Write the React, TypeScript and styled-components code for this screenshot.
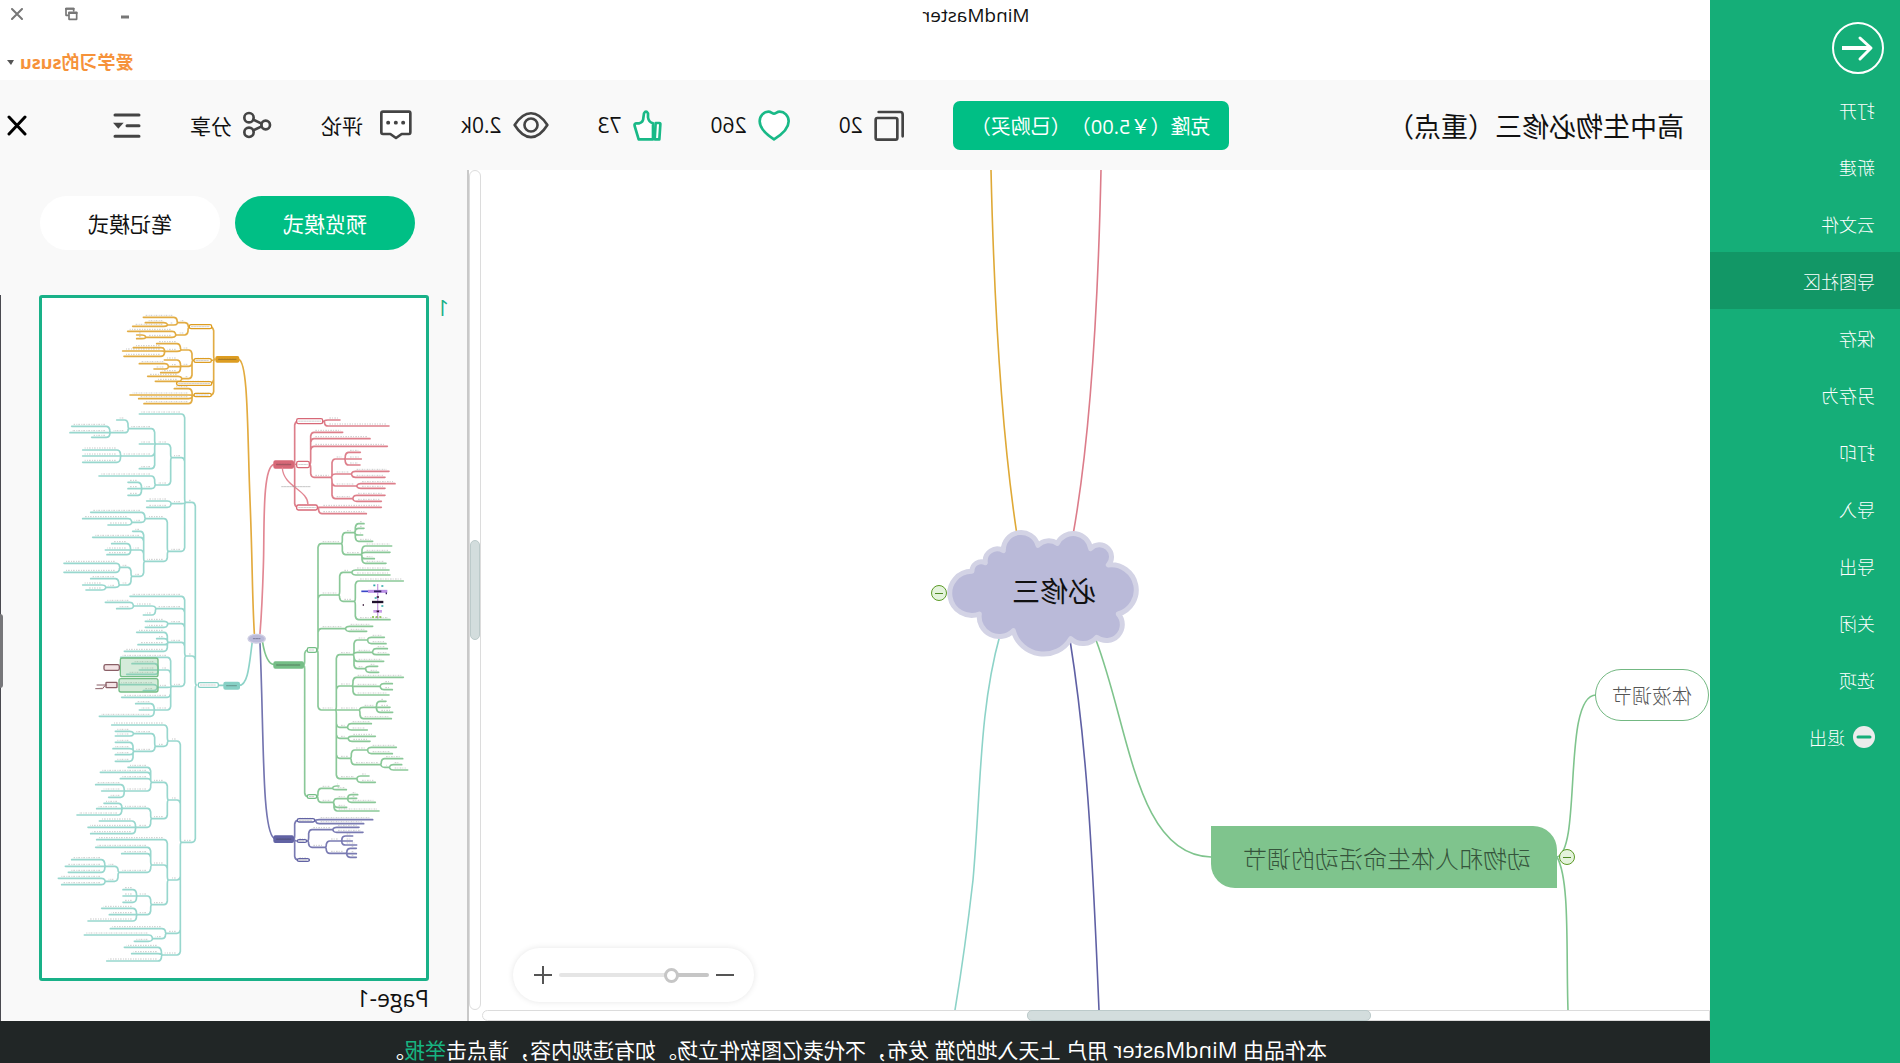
import React from "react";
import styled, { createGlobalStyle, css } from "styled-components";

const GlobalStyle = createGlobalStyle`
  *, *::before, *::after { box-sizing: border-box; }
  html, body { margin: 0; padding: 0; overflow: hidden; }
  button, input { font: inherit; color: inherit; }
  button { border: 0; background: none; padding: 0; cursor: pointer; }
`;

const brand = "#00bf85";
const ink = "#444444";

/* The whole window is shown as a mirror image. */
const Window = styled.div`
  display: flex;
  height: 100vh;
  transform: scaleX(-1);
  background: #ffffff;
  color: #111111;
  font-family: "Open Sans", "Noto Sans CJK SC", sans-serif;
  font-size: 21px;
  text-spacing-trim: space-all;
`;

/* Drawings are written in screen direction, so they are turned back. */
const Drawing = styled.svg`
  display: block;
  flex: none;
  transform: scaleX(-1);
  fill: none;
  stroke-linecap: round;
  stroke-linejoin: round;
`;

/* ---------- sidebar ---------- */

const Sidebar = styled.nav`
  flex: 0 0 190px;
  background: #15ae78;
  color: #ffffff;
`;

const BackButton = styled.button`
  display: block;
  margin: 22px 0 7px 16px;
`;

const Menu = styled.ul`
  list-style: none;
  margin: 0;
  padding: 0;
`;

const MenuButton = styled.button<{ $active?: boolean }>`
  display: flex;
  align-items: center;
  gap: 8px;
  width: 100%;
  height: 57px;
  padding-left: 25px;
  font-size: 18px;
  font-weight: 300;
  background: ${(p) => (p.$active ? "#129766" : "transparent")};
`;

/* ---------- header ---------- */

const Main = styled.div`
  flex: 1;
  min-width: 0;
  display: flex;
  flex-direction: column;
`;

const TitleBar = styled.header`
  display: flex;
  height: 80px;
`;

const AppName = styled.div`
  flex: 1;
  text-align: center;
  font-size: 19px;
  line-height: 30px;
`;

const Account = styled.div`
  flex: 0 0 242px;
  display: flex;
  flex-direction: column;
  align-items: flex-end;
  justify-content: space-between;
  padding: 7px 11px 6px 0;
`;

const WindowControls = styled.div`
  display: flex;
  align-items: center;
  gap: 42px;
`;

const UserButton = styled.button`
  display: flex;
  align-items: center;
  gap: 6px;
  margin-right: -4px;
  color: #f6923a;
  font-size: 18px;
  font-weight: 700;
  line-height: 24px;
`;

const Toolbar = styled.div`
  display: flex;
  align-items: center;
  gap: 49px;
  height: 90px;
  padding: 0 7px 0 26px;
  background: #f9f9f9;
`;

const DocTitle = styled.h1`
  flex: 1;
  margin: 0;
  font-size: 27px;
  font-weight: 400;
  white-space: nowrap;
`;

const CloneButton = styled.button`
  width: 276px;
  height: 49px;
  border-radius: 7px;
  background: ${brand};
  color: #ffffff;
  font-size: 20px;
  white-space: nowrap;
`;

const Tool = styled.button<{ $gap?: number }>`
  display: flex;
  align-items: center;
  gap: ${(p) => p.$gap ?? 11}px;
  white-space: nowrap;
`;

const CloseTool = styled.button`
  margin-left: 37px;
`;

/* ---------- canvas ---------- */

const Body = styled.div`
  flex: 1;
  min-height: 0;
  display: flex;
`;

const CanvasColumn = styled.main`
  flex: 1;
  min-width: 0;
  display: flex;
  flex-direction: column;
`;

const Canvas = styled.div`
  position: relative;
  flex: 1;
  min-height: 0;
  overflow: hidden;
`;

const place = css<{ $left: number; $top: number }>`
  position: absolute;
  left: ${(p) => p.$left}px;
  top: ${(p) => p.$top}px;
`;

const RootLabel = styled.div<{ $left: number; $top: number }>`
  ${place}
  width: 170px;
  height: 126px;
  display: grid;
  place-items: center;
  font-size: 28px;
`;

const TopicNode = styled.div<{ $left: number; $top: number }>`
  ${place}
  width: 346px;
  height: 62px;
  display: grid;
  place-items: center;
  padding-right: 6px;
  border-radius: 24px 0 24px 0;
  background: #7fc48d;
  color: #35543b;
  font-size: 24px;
  font-weight: 300;
`;

const SubNode = styled.div<{ $left: number; $top: number }>`
  ${place}
  width: 114px;
  height: 52px;
  display: grid;
  place-items: center;
  border: 1px solid #73b882;
  border-radius: 26px;
  background: #ffffff;
  color: #555555;
  font-size: 20px;
  font-weight: 300;
`;

const Collapse = styled.button<{ $left: number; $top: number }>`
  ${place}
  width: 16px;
  height: 16px;
  display: grid;
  place-items: center;
  border: 1px solid #5b9a26;
  border-radius: 50%;
  background: #e4f3dc;

  &::after {
    content: "";
    width: 8px;
    height: 1px;
    background: #4f8a24;
  }
`;

const ZoomBar = styled.div`
  position: absolute;
  right: 31px;
  bottom: 8px;
  display: flex;
  align-items: center;
  gap: 7px;
  width: 241px;
  height: 54px;
  padding: 0 21px 0 20px;
  border-radius: 27px;
  background: #ffffff;
  box-shadow: 0 0 6px rgba(0, 0, 0, 0.1);
`;

const Range = styled.input`
  appearance: none;
  flex: 1;
  min-width: 0;
  height: 4px;
  margin: 0;
  border-radius: 2px;
  background: linear-gradient(to right, #c6c6c6 24%, #e5e5e5 24%);

  &::-webkit-slider-thumb {
    appearance: none;
    width: 15px;
    height: 15px;
    border: 3px solid #c6c6c6;
    border-radius: 50%;
    background: #ffffff;
  }
`;

const HScroll = styled.div`
  height: 11px;
  border: 1px solid #dcdcdc;
  border-radius: 0 6px 6px 0;
`;

const HThumb = styled.div`
  width: 28%;
  height: 11px;
  margin: -1px 0 0 27.6%;
  border: 1px solid #bccaca;
  border-radius: 5px;
  background: #d3dddd;
`;

const VScroll = styled.div`
  flex: 0 0 12px;
  margin: 0 0 11px 1px;
  border: 1px solid #dcdcdc;
  border-radius: 6px;
  display: flex;
  flex-direction: column;
`;

const VThumb = styled.div`
  flex: 0 0 12%;
  border: 1px solid #bccaca;
  border-radius: 6px;
  background: #d3dddd;
`;

const Spacer = styled.div`
  flex: 0 0 44%;
`;

/* ---------- preview panel ---------- */

const Panel = styled.aside`
  position: relative;
  flex: 0 0 469px;
  padding: 26px 39px 0 18px;
  border-left: 2px solid #c9c9c9;
  background: #f9f9f9;
`;

const PanelScroll = styled.div`
  position: absolute;
  right: 0;
  top: 125px;
  bottom: 0;
  width: 1px;
  background: #4a4a50;

  &::after {
    content: "";
    position: absolute;
    right: 0;
    top: 44%;
    width: 3px;
    height: 74px;
    border-radius: 3px 0 0 3px;
    background: #77777a;
  }
`;

const Modes = styled.div`
  display: flex;
  gap: 15px;
  padding: 0 1px 0 34px;
`;

const ModeButton = styled.button<{ $active?: boolean }>`
  flex: 1;
  height: 54px;
  border-radius: 27px;
  background: ${(p) => (p.$active ? brand : "#ffffff")};
  color: ${(p) => (p.$active ? "#ffffff" : "#111111")};
`;

const PageItem = styled.figure`
  display: grid;
  grid-template-columns: 8px 1fr;
  column-gap: 12px;
  margin: 45px 0 0;
`;

const PageNumber = styled.span`
  color: #19b188;
  line-height: 26px;
`;

const Thumb = styled.div`
  border: 3px solid #19b188;
  border-radius: 3px;
  background: #ffffff;
`;

const PageName = styled.figcaption`
  grid-column: 2;
  font-size: 23px;
  line-height: 34px;
`;

/* ---------- footer ---------- */

const Footer = styled.footer`
  height: 42px;
  padding-top: 13px;
  overflow: hidden;
  background: #212626;
  color: #ffffff;
  line-height: 30px;
  text-align: center;
  white-space: nowrap;
`;

const ProductName = styled.span`
  font-weight: 500;
  font-size: 22px;
`;

const Report = styled.a`
  color: #17b481;
  text-decoration: none;
`;

/* ---------- page thumbnail ---------- */

type Branch = [number, number, Branch[]?];
type Box = [number, number, number, number];

interface Tree {
  color: string;
  origin: [number, number];
  dir: 1 | -1;
  root: Branch;
  filled: Box;
  boxes: Box[];
}

const trees: Tree[] = [
  {
    color: "#dd9d22",
    origin: [0, 840],
    dir: -1,
    filled: [648, 230, 68, 16],
    boxes: [[568, 134, 67, 12], [582, 236, 52, 11], [530, 305, 105, 11], [582, 340, 52, 10]],
    root: [645, 238, [
      [568, 141, [
        [535, 128, [[430, 112], [505, 135, [[436, 128], [398, 139]]]]],
        [530, 165, [[383, 154], [440, 172, [[410, 165], [410, 176]]]]],
      ]],
      [580, 241, [
        [545, 210, [[470, 191], [497, 214, [[400, 203], [368, 213], [372, 229]]]]],
        [545, 259, [[493, 240], [508, 260, [[418, 251], [462, 267]]], [482, 278]]],
        [548, 296, [[443, 289], [466, 304]]],
      ]],
      [530, 310],
      [580, 346, [[523, 326], [390, 345], [416, 356], [432, 371]]],
    ]],
  },
  {
    color: "#d76877",
    origin: [660, 1140],
    dir: 1,
    filled: [162, 243, 58, 21],
    boxes: [[230, 116, 78, 15], [230, 244, 38, 19], [230, 375, 62, 15]],
    root: [220, 253, [
      [310, 124, [[360, 120], [507, 138]]],
      [268, 253, [
        [368, 157], [450, 176], [502, 199],
        [332, 292, [
          [372, 237, [[421, 217], [424, 237], [420, 255]]],
          [392, 282, [[507, 274], [495, 292]]],
          [408, 318, [[525, 311], [495, 325]]],
          [396, 356, [[495, 346], [484, 364]]],
        ]],
      ]],
      [292, 382, [[484, 382], [439, 401]]],
    ]],
  },
  {
    color: "#75be86",
    origin: [660, 1860],
    dir: 1,
    filled: [162, 126, 88, 18],
    boxes: [[262, 83, 28, 14], [262, 524, 28, 11]],
    root: [250, 135, [
      [290, 90, [
        [363, -229, [
          [402, -262, [[432, -289], [432, -275], [428, -255], [458, -236]]],
          [422, -196, [[515, -222], [510, -203], [463, -184], [498, -170]]],
        ]],
        [355, -75, [[393, -143, [[507, -150], [510, -135]]], [402, -56, [[550, -117], [510, -1]]]]],
        [374, 26, [[458, 19], [440, 34]]],
        [345, 270, [
          [398, 104, [
            [440, 60, [[493, 52], [498, 71]]],
            [455, 97, [[502, 86], [507, 104]]],
            [491, 124],
            [434, 146, [[473, 139], [476, 157]]],
          ]],
          [395, 198, [[550, 172], [478, 199, [[517, 191], [517, 209]]], [507, 225]]],
          [416, 270, [[466, 262, [[498, 244], [510, 262], [518, 277]]], [514, 296]]],
          [380, 322, [[454, 311], [442, 330]]],
          [382, 355, [[466, 349], [450, 364]]],
          [390, 415, [
            [440, 390, [[529, 382], [517, 401]]],
            [480, 434, [[548, 416], [506, 442, [[545, 434], [563, 450]]]]],
          ]],
          [408, 476, [[447, 468], [466, 487]]],
        ]],
      ]],
      [290, 530, [
        [335, 505, [[357, 498], [379, 509]]],
        [338, 547, [[380, 536, [[413, 524], [410, 535], [466, 547]]], [380, 562], [477, 573]]],
      ]],
    ]],
  },
  {
    color: "#6263a4",
    origin: [660, 1860],
    dir: 1,
    filled: [162, 648, 58, 19],
    boxes: [[232, 596, 52, 10], [232, 659, 28, 8], [232, 716, 36, 8]],
    root: [220, 658, [
      [284, 601, [[458, 599], [431, 611]]],
      [262, 663, [
        [336, 629, [[417, 622], [429, 637]]],
        [315, 682, [
          [362, 663, [[398, 648], [397, 663], [410, 675]]],
          [377, 700, [[409, 685], [409, 701], [409, 712]]],
        ]],
      ]],
      [268, 720],
    ]],
  },
  {
    color: "#86d0c5",
    origin: [0, 1500],
    dir: -1,
    filled: [672, 547, 46, 20],
    boxes: [[595, 548, 60, 14]],
    root: [590, 555, [
      [558, 7, [
        [418, -258],
        [516, -127, [
          [468, -168, [
            [388, -214, [[350, -240], [333, -202, [[215, -221], [210, -202], [275, -188]]]]],
            [418, -168],
            [365, -132, [[248, -150], [248, -132], [248, -113]]],
            [418, -94],
          ]],
          [468, -45, [[297, -72], [428, -34, [[384, -53], [384, -34], [384, -14]]]]],
        ]],
        [516, 11, [[440, 3], [440, 22]]],
        [506, 154, [
          [438, 56, [[272, 37], [398, 67, [[248, 56], [324, 75]]]]],
          [435, 184, [
            [398, 94], [278, 112],
            [395, 150, [[335, 131], [316, 150], [321, 164]]],
            [397, 229, [
              [362, 202, [[192, 190], [192, 217]]],
              [360, 255, [[272, 236], [320, 262, [[248, 255], [258, 270]]]]],
            ]],
          ]],
        ]],
      ]],
      [558, 468, [
        [390, 289],
        [470, 326, [[403, 318, [[316, 307], [350, 326]]], [430, 345]]],
        [506, 371, [[436, 364], [436, 382]]],
        [506, 427, [[410, 397], [470, 416], [414, 434], [373, 454]]],
        [516, 559, [
          [362, 472],
          [478, 510, [[396, 491], [418, 510], [380, 523]]],
          [474, 562, [[358, 554], [430, 572]]],
          [365, 592],
          [466, 630, [[407, 611], [418, 630], [298, 649]]],
        ]],
      ]],
      [545, 1027, [
        [506, 723, [
          [335, 675],
          [468, 739, [
            [403, 701, [[346, 694], [346, 708]]],
            [403, 754, [[346, 727], [339, 746], [346, 764], [346, 784]]],
          ]],
        ]],
        [506, 900, [
          [456, 847, [[384, 802], [301, 817], [361, 836], [376, 873, [[287, 854], [305, 873], [326, 892]]]]],
          [456, 956, [
            [369, 925, [[312, 910], [290, 926], [231, 945]]],
            [410, 982, [[298, 963], [264, 982], [272, 1001]]],
          ]],
        ]],
        [506, 1140, [
          [290, 1019],
          [456, 1095, [
            [287, 1042], [365, 1061],
            [358, 1117, [
              [318, 1099, [[215, 1079], [196, 1099], [205, 1117]]],
              [318, 1144, [[175, 1135], [185, 1154]]],
            ]],
          ]],
          [456, 1214, [
            [413, 1188, [[369, 1169], [369, 1188], [369, 1207]]],
            [413, 1244, [[305, 1225], [328, 1244], [264, 1263]]],
          ]],
        ]],
        [500, 1300, [[331, 1286], [460, 1316, [[253, 1305], [403, 1324]]]]],
        [488, 1365, [[373, 1342], [395, 1361], [320, 1383]]],
      ]],
    ]],
  },
];

function collect(branch: Branch, dir: number, lines: string[], notes: string[]) {
  const [x, y, children] = branch;
  (children ?? []).forEach((child) => {
    const [cx, cy] = child;
    const turn = x + dir * 14;
    const bend = Math.sign(cy - y) * Math.min(22, Math.abs(cy - y));
    lines.push(`M${x} ${y}Q${x + dir * 4} ${y} ${x + dir * 4} ${y + bend / 2}V${cy - bend / 2}Q${x + dir * 6} ${cy} ${turn} ${cy}H${cx}`);
    notes.push(`M${turn + dir * 4} ${cy - 6}H${cx - dir * 6}`);
    collect(child, dir, lines, notes);
  });
}

function TreeDrawing({ tree }: { tree: Tree }) {
  const lines: string[] = [];
  const notes: string[] = [];
  collect(tree.root, tree.dir, lines, notes);
  const [fx, fy, fw, fh] = tree.filled;
  return (
    <g transform={`translate(${tree.origin[0]} ${tree.origin[1]})`} stroke={tree.color} strokeWidth="4">
      <path d={lines.join("")} strokeWidth="5" opacity="0.85" />
      <path d={notes.join("")} stroke="#8c8c8c" strokeWidth="3" strokeDasharray="5 3 3 4" strokeLinecap="butt" opacity="0.45" />
      <rect x={fx} y={fy} width={fw} height={fh} rx="4" fill={tree.color} />
      <path d={`M${fx + 8} ${fy + fh / 2}H${fx + fw - 8}`} stroke="#333333" strokeDasharray="5 3" opacity="0.3" />
      {tree.boxes.map(([x, y, w, h]) => (
        <rect key={`${x}-${y}`} x={x} y={y} width={w} height={h} rx="5" fill="#ffffff" />
      ))}
      {tree.boxes.map(([x, y, w, h]) => (
        <path key={`${x}-${y}`} d={`M${x + 6} ${y + h / 2}H${x + w - 6}`} stroke="#8c8c8c" strokeWidth="3" strokeDasharray="5 3" opacity="0.4" />
      ))}
    </g>
  );
}

function Thumbnail() {
  return (
    <Drawing width="100%" viewBox="126 894 1152 2040" role="img" aria-label="Page-1">
      <g strokeWidth="5">
        <path d="M716 1078C745 1085 742 1300 750 1500S756 1780 763 1900" stroke="#e3ab3e" />
        <path d="M822 1393C785 1400 794 1600 790 1700C787 1800 784 1850 780 1900" stroke="#e28793" />
        <path d="M788 1928C795 1970 805 1992 822 1994" stroke="#7fc48d" />
        <path d="M757 1924C748 1990 745 2056 717 2056M672 2056H655" stroke="#8dd3c8" />
        <path d="M780 1930C792 2200 785 2490 822 2515" stroke="#7475b0" />
      </g>
      {trees.map((tree) => (
        <TreeDrawing key={tree.color} tree={tree} />
      ))}
      <path d="M847 1404C850 1460 925 1470 924 1514" stroke="#e28793" strokeWidth="4" />
      <path d="M845 1460H930" stroke="#8c8c8c" strokeWidth="3" strokeDasharray="5 3" opacity="0.5" />
      <g fill="#75be86" fillOpacity="0.3" stroke="#75be86" strokeWidth="4">
        <rect x="361" y="1974" width="113" height="56" rx="6" />
        <rect x="357" y="2036" width="117" height="40" rx="6" />
      </g>
      <g fill="#f3e3e5" stroke="#8a5f66" strokeWidth="4">
        <rect x="312" y="1994" width="46" height="17" rx="5" />
        <rect x="318" y="2047" width="33" height="16" rx="2" />
        <path d="M318 2055H291M314 2058L308 2066H287" strokeWidth="3" />
      </g>
      <g strokeWidth="5" strokeLinecap="butt">
        <path d="M1133 1752V1856" stroke="#c9a0e0" strokeWidth="4" />
        <path d="M1084 1774H1112" stroke="#3a46c8" />
        <path d="M1104 1774H1162" stroke="#b98fe6" strokeWidth="9" />
        <path d="M1122 1774H1144M1157 1780H1161" stroke="#30205c" />
        <path d="M1116 1806H1150" stroke="#20122c" strokeWidth="7" />
        <path d="M1120 1834H1146" stroke="#c79be6" strokeWidth="8" />
        <path d="M1130 1834H1137M1130 1791H1137M1088 1815H1092" stroke="#301030" />
        <path d="M1120 1756H1126M1144 1758H1150M1124 1794H1130M1144 1818H1150" stroke="#2aa6a6" />
        <path d="M1116 1851H1146" stroke="#7cba3a" strokeDasharray="6 5" />
      </g>
      <ellipse cx="770" cy="1916" rx="26" ry="13" fill="#babad9" stroke="#cfcfe3" strokeWidth="4" />
      <path d="M760 1916H780" stroke="#555577" strokeWidth="3" strokeDasharray="5 3" opacity="0.6" />
    </Drawing>
  );
}

/* ---------- main map ---------- */

function MapDrawing() {
  return (
    <Drawing width="1228" height="840" viewBox="482 170 1228 840" aria-hidden="true">
      <g strokeWidth="1.6">
        <path d="M991 170C994 300 1001 430 1017 535" stroke="#dfa936" />
        <path d="M1101 170C1098 310 1090 440 1073 535" stroke="#dc7c8a" />
        <path d="M1000 635C979 710 981 790 973 880Q965 950 955 1010" stroke="#8dd3c8" />
        <path d="M1070 640C1086 740 1092 840 1099 1010" stroke="#5f60a4" />
        <path d="M1096 640C1130 730 1136 855 1211 857" stroke="#7fc48d" />
        <path d="M1557 857C1582 850 1562 695 1596 695M1557 857C1570 880 1566 950 1568 1010" stroke="#7fc48d" />
      </g>
      <path
        transform="translate(900 500) scale(0.3333)"
        d="M238 342A66 66 0 1 1 216 214A28 28 0 0 1 256 188A36 36 0 0 1 310 152A53 53 0 0 1 414 136A46 46 0 0 1 472 130A53 53 0 0 1 572 146A36 36 0 0 1 625 195A75.3 75.3 0 0 1 655 342A48 48 0 0 1 590 412A54 54 0 0 1 512 416A94 94 0 0 1 340 392A60 60 0 0 1 238 342Z"
        fill="#babad9"
        stroke="#d3d3e5"
        strokeWidth="15"
      />
    </Drawing>
  );
}

const menuItems = ["打开", "新建", "云文件", "导图社区", "保存", "另存为", "打印", "导入", "导出", "关闭", "选项"];

export default function App() {
  return (
    <>
      <GlobalStyle />
      <Window>
        <Sidebar>
          <BackButton aria-label="返回">
            <Drawing width="52" height="52" viewBox="0 0 52 52" stroke="#ffffff">
              <circle cx="26" cy="26" r="25" strokeWidth="2" />
              <path d="M10 26H39" strokeWidth="4" strokeLinecap="butt" />
              <path d="M28 16L39 26L28 37" strokeWidth="3" />
            </Drawing>
          </BackButton>
          <Menu>
            {menuItems.map((item) => (
              <li key={item}>
                <MenuButton $active={item === "导图社区"}>{item}</MenuButton>
              </li>
            ))}
            <li>
              <MenuButton>
                <Drawing width="22" height="22" viewBox="0 0 22 22">
                  <circle cx="11" cy="11" r="11" fill="#ececec" />
                  <path d="M5 11H17" stroke="#15ae78" strokeWidth="3" />
                </Drawing>
                退出
              </MenuButton>
            </li>
          </Menu>
        </Sidebar>

        <Main>
          <TitleBar>
            <AppName>MindMaster</AppName>
            <Account>
              <WindowControls>
                <button aria-label="最小化">
                  <Drawing width="10" height="14" viewBox="0 0 10 14">
                    <path d="M1 10H9" stroke="#777777" strokeWidth="3" strokeLinecap="butt" />
                  </Drawing>
                </button>
                <button aria-label="还原">
                  <Drawing width="13" height="14" viewBox="0 0 39 42" stroke="#777777" strokeLinejoin="miter">
                    <path d="M10 25H3V5H26V12" strokeWidth="5" />
                    <path d="M3 5H26" strokeWidth="6" />
                    <path d="M12 16H35V37H12Z" strokeWidth="5" />
                    <path d="M12 18H35" strokeWidth="6" />
                  </Drawing>
                </button>
                <button aria-label="关闭">
                  <Drawing width="12" height="12" viewBox="0 0 12 12">
                    <path d="M1 1L11 11M11 1L1 11" stroke="#777777" strokeWidth="2" />
                  </Drawing>
                </button>
              </WindowControls>
              <UserButton>
                爱学习的susu
                <Drawing width="7" height="5" viewBox="0 0 7 5">
                  <path d="M0 0H7L4 5Z" fill="#555555" />
                </Drawing>
              </UserButton>
            </Account>
          </TitleBar>

          <Toolbar>
            <DocTitle>高中生物必修三（重点）</DocTitle>
            <CloneButton>克隆（￥5.00）（已购买）</CloneButton>
            <Tool>
              <Drawing width="30" height="31" viewBox="1307 88 90 93" stroke={ink} strokeWidth="8">
                <rect x="1312" y="112" width="65" height="65" rx="5" />
                <path d="M1321 94H1386Q1393 94 1393 102V167" />
              </Drawing>
              20
            </Tool>
            <Tool>
              <Drawing width="32" height="31" viewBox="962 88 96 93" stroke="#19b987" strokeWidth="8">
                <path fill="#ffffff" d="M1010 176C985 160 967 141 967 122C967 105 980 93 993 93C1001 93 1005 99 1010 99C1015 99 1019 93 1027 93C1041 93 1054 105 1054 122C1054 141 1035 161 1010 176Z" />
              </Drawing>
              260
            </Tool>
            <Tool>
              <Drawing width="29" height="31" viewBox="581 88 87 93" stroke="#19b987" strokeWidth="8">
                <path fill="#ffffff" d="M598 176L586 136Q584 128 592 128H600Q612 124 612 112L614 98Q620 88 626 98V110Q628 124 641 128V176Z" />
                <path fill="#ffffff" d="M649 127H660Q664 127 663 132L660 176H646Z" />
              </Drawing>
              73
            </Tool>
            <Tool>
              <Drawing width="36" height="30" viewBox="230 88 110 90" stroke={ink} strokeWidth="8">
                <path d="M235 133Q258 97 285 97Q312 97 335 133Q312 170 285 170Q258 170 235 133Z" />
                <circle cx="285" cy="133" r="20" />
              </Drawing>
              2.0k
            </Tool>
            <Tool $gap={17}>
              <Drawing width="32" height="30" viewBox="1149 330 96 90" stroke={ink} strokeWidth="8">
                <path fill="#ffffff" d="M1158 335H1236Q1240 335 1240 340V397Q1240 402 1236 402H1214L1197 414L1180 402H1158Q1153 402 1153 397V340Q1153 335 1158 335Z" />
                <path d="M1173 368H1174M1196 368H1197M1218 368H1219" strokeWidth="11" />
              </Drawing>
              评论
            </Tool>
            <Tool>
              <Drawing width="29" height="28" viewBox="735 333 87 84" stroke={ink} strokeWidth="8">
                <circle cx="753" cy="353" r="14" />
                <circle cx="753" cy="397" r="14" />
                <circle cx="803" cy="375" r="13" />
                <path d="M766 359L791 371M766 391L791 379" />
              </Drawing>
              分享
            </Tool>
            <Tool aria-label="大纲">
              <Drawing width="28" height="25" viewBox="342 337 84 75" stroke={ink} strokeWidth="9">
                <path d="M348 343H420M348 407H420M384 375H420" />
                <path d="M342 366H374L358 384Z" fill={ink} stroke="none" />
              </Drawing>
            </Tool>
            <CloseTool aria-label="关闭预览">
              <Drawing width="20" height="21" viewBox="0 0 20 21">
                <path d="M2 2L18 19M18 2L2 19" stroke="#000000" strokeWidth="3" />
              </Drawing>
            </CloseTool>
          </Toolbar>

          <Body>
            <CanvasColumn>
              <Canvas>
                <MapDrawing />
                <RootLabel $left={571} $top={357}>必修三</RootLabel>
                <Collapse $left={763} $top={415} aria-label="收起左侧" />
                <TopicNode $left={153} $top={656}>动物和人体生命活动的调节</TopicNode>
                <Collapse $left={135} $top={679} aria-label="收起分支" />
                <SubNode $left={1} $top={499}>体液调节</SubNode>
                <ZoomBar>
                  <button aria-label="缩小">
                    <Drawing width="18" height="18" viewBox="0 0 18 18">
                      <path d="M0 9H18" stroke="#555555" strokeWidth="2" strokeLinecap="butt" />
                    </Drawing>
                  </button>
                  <Range type="range" min="0" max="100" defaultValue="22" aria-label="缩放" />
                  <button aria-label="放大">
                    <Drawing width="18" height="18" viewBox="0 0 18 18">
                      <path d="M0 9H18M9 0V18" stroke="#555555" strokeWidth="2" strokeLinecap="butt" />
                    </Drawing>
                  </button>
                </ZoomBar>
              </Canvas>
              <HScroll>
                <HThumb />
              </HScroll>
            </CanvasColumn>
            <VScroll>
              <Spacer />
              <VThumb />
            </VScroll>
            <Panel>
              <Modes>
                <ModeButton $active>预览模式</ModeButton>
                <ModeButton>笔记模式</ModeButton>
              </Modes>
              <PageItem>
                <PageNumber>1</PageNumber>
                <Thumb>
                  <Thumbnail />
                </Thumb>
                <PageName>Page-1</PageName>
              </PageItem>
              <PanelScroll />
            </Panel>
          </Body>

          <Footer>
            本作品由 <ProductName>MindMaster</ProductName> 用户 上天入地的猫 发布，不代表亿图软件立场。如有违规内容，请点击<Report href="#report">举报</Report>。
          </Footer>
        </Main>
      </Window>
    </>
  );
}
